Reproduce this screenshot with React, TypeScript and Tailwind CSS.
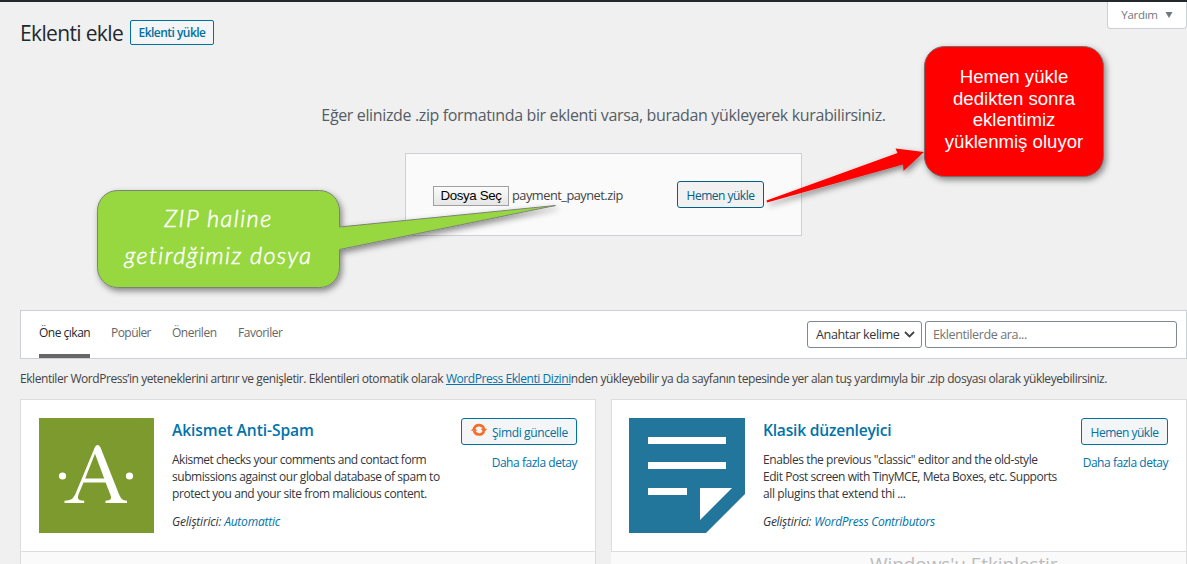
import type { ReactNode } from 'react';

const nav = [
  { label: 'Öne çıkan', active: true, cls: 'w-[51px] tracking-[-0.500px]' },
  { label: 'Popüler', active: false, cls: 'w-[40px] tracking-[-0.550px]' },
  { label: 'Önerilen', active: false, cls: 'w-[45px] tracking-[-0.500px]' },
  { label: 'Favoriler', active: false, cls: 'w-[44px] tracking-[-0.480px]' },
];

function AkismetLogo() {
  return (
    <svg width="115" height="115" viewBox="0 0 115 115" className="block">
      <rect width="115" height="115" fill="#7c9a2d" />
      <circle cx="23.500" cy="58" r="3.600" fill="#fff" />
      <circle cx="90.500" cy="58" r="3.600" fill="#fff" />
      <path
        fill="#fff"
        fillRule="evenodd"
        d="M25.500 85v-2.200c6.500-.4 8.500-1.600 11-7L54.500 32.500c1.200-3.200 2.200-5.400 4-5.400s2.800 1.600 3.800 4.400L79.500 75c2.300 5.800 4 7.400 8.500 7.800V85H66.500v-2.200c5.500-.4 6.500-1.800 4.800-6.300L66.600 64.500H44.500l-4.700 11.300c-2 5-1 6.600 5.400 7V85zM46.200 60.500h19L56 35.800z"
      />
    </svg>
  );
}

function ClassicLogo() {
  return (
    <svg width="116" height="115" viewBox="0 0 116 115" className="-ml-px block">
      <path fill="#22759b" d="M0 0H116V76L77 115H0z" />
      <path fill="#fff" d="M19 19h78v7H19zM19 44h78v7H19zM19 70h39v7H19zM71 70h32L71 102z" />
    </svg>
  );
}

function UpdateIcon() {
  return (
    <svg width="16" height="14" viewBox="0 0 16 14" className="mt-[-5px] block">
      <path d="M3.200 5.200A5.200 5.200 0 0 1 13 6M12.800 8.400A5.200 5.200 0 0 1 3 7.600" fill="none" stroke="#f56e28" strokeWidth="2.600" />
      <path fill="#f56e28" d="M-0.200 7.800 3 4l3.300 3.800zM16.200 5.700 13 9.500 9.700 5.700z" />
    </svg>
  );
}

function Card({
  logo,
  title,
  titleCls,
  lines,
  author,
  authorCls,
  action,
  footerCls,
  children,
}: {
  logo: ReactNode;
  title: string;
  titleCls: string;
  lines: { text: string; cls: string }[];
  author: string;
  authorCls: string;
  action: ReactNode;
  footerCls: string;
  children?: ReactNode;
}) {
  return (
    <article className="h-[180px] w-[576px]">
      <div className="flex h-[152px] border border-b-0 border-[#dddddd] bg-white pt-[18px] pr-[18px]">
        <div className="w-[133px] shrink-0 pl-[18px]">{logo}</div>
        <div className="min-w-0 flex-1 pl-[18px] whitespace-nowrap">
          <h3 className={`h-[33px] text-[15.600px] leading-[24px] font-semibold text-[#0073aa] ${titleCls}`}>{title}</h3>
          {lines.map((l) => (
            <p key={l.text} className={`text-[12px] leading-[17px] text-[#32373c] ${l.cls}`}>
              {l.text}
            </p>
          ))}
          <p className={`mt-[11px] text-[12px] leading-[17px] text-[#32373c] italic ${authorCls}`}>
            Geliştirici: <a className="text-[#0073aa]">{author}</a>
          </p>
        </div>
        <div className="flex flex-col items-end whitespace-nowrap">
          {action}
          <a className="mt-[9px] text-[12px] leading-[18px] tracking-[-0.460px] text-[#0073aa]">Daha fazla detay</a>
        </div>
      </div>
      <div className={`h-[28px] overflow-hidden border-t border-[#dddddd] bg-[#fafafa] ${footerCls}`}>{children}</div>
    </article>
  );
}

export default function App() {
  return (
    <div className="relative h-[564px] w-[1187px] overflow-hidden border-t-2 border-[#23282d] bg-[#f0f0f0] font-['Open_Sans','Noto_Sans',sans-serif] text-[#444444]">
      <header className="flex h-[95px] justify-between pl-5">
        <div className="flex h-[61px] items-center whitespace-nowrap">
          <h1 className="w-[110px] text-[21px] leading-[28px] font-normal tracking-[-0.650px] text-[#23282d]">Eklenti ekle</h1>
          <button className="flex h-[25px] w-[84px] items-center justify-center rounded-[2px] border border-[#0071a1] bg-[#f3f5f6] text-[12px] font-semibold tracking-[-0.540px] text-[#0071a1]">
            Eklenti yükle
          </button>
        </div>
        <div className="flex h-[27px] w-[80px] items-center justify-center gap-[7px] rounded-b-[4px] border border-t-0 border-[#ccd0d4] bg-white text-[11.500px] tracking-[-0.300px] text-[#72777c]">
          Yardım
          <svg width="8" height="6" viewBox="0 0 8 6">
            <path d="M0.500 0h7L4 6z" fill="#72777c" />
          </svg>
        </div>
      </header>

      <section className="flex h-[213px] flex-col items-center pl-[20px]">
        <p className="h-[56px] text-[16px] leading-[36px] tracking-[-0.360px] whitespace-nowrap text-[#555d66]">
          Eğer elinizde .zip formatında bir eklenti varsa, buradan yükleyerek kurabilirsiniz.
        </p>
        <form className="flex h-[83px] w-[397px] items-center border border-[#ccd0d4] bg-[#fafafa] pl-[27px]">
          <span className="mt-[2px] flex h-[20px] w-[76px] items-center justify-center border border-[#a0a0a0] bg-gradient-to-b from-[#fbfbfb] to-[#e6e6e6] font-['Liberation_Sans',sans-serif] text-[13.300px] tracking-[-0.350px] whitespace-nowrap text-black">
            Dosya Seç
          </span>
          <span className="mt-[2px] w-[168px] pl-[3px] text-[12.800px] tracking-[-0.500px]">payment_paynet.zip</span>
          <span className="flex h-[27px] w-[87px] items-center justify-center rounded-[3px] border border-[#016087] bg-[#f1f1f1] pt-[2px] text-[12px] tracking-[-0.500px] text-[#016087]">
            Hemen yükle
          </span>
        </form>
      </section>

      <section className="ml-5 flex h-[49px] justify-between border border-[#ccd0d4] bg-white pr-[9px] pl-[18px]">
        <nav className="flex gap-[21px]">
          {nav.map((n) => (
            <a
              key={n.label}
              className={`${n.cls} h-[47px] border-b-4 pt-[13px] text-[12px] leading-[18px] whitespace-nowrap ${
                n.active ? 'border-[#666666] text-[#23282d]' : 'border-transparent text-[#666666]'
              }`}
            >
              {n.label}
            </a>
          ))}
        </nav>
        <div className="flex gap-[3px] pt-[10px]">
          <div className="flex h-[27px] w-[115px] items-center justify-between rounded-[3px] border border-[#7e8993] pt-[2px] pr-[6px] pl-[8px] text-[12.600px] tracking-[-0.400px] whitespace-nowrap text-[#32373c]">
            Anahtar kelime
            <svg width="11" height="7" viewBox="0 0 11 7" className="mt-[-2px] shrink-0">
              <path d="M1 1l4.500 4.500L10 1" fill="none" stroke="#444" strokeWidth="1.800" />
            </svg>
          </div>
          <div className="flex h-[27px] w-[252px] items-center rounded-[3px] border border-[#7e8993] pt-[2px] pl-[7px] text-[12.600px] tracking-[-0.420px] text-[#757575]">
            Eklentilerde ara...
          </div>
        </div>
      </section>

      <p className="h-[40px] pt-[11px] pl-5 text-[12px] leading-[18px] tracking-[-0.435px] whitespace-nowrap">
        Eklentiler WordPress’in yeteneklerini artırır ve genişletir. Eklentileri otomatik olarak{' '}
        <a className="text-[#0073aa] underline">WordPress Eklenti Dizini</a>nden yükleyebilir ya da sayfanın tepesinde yer alan tuş
        yardımıyla bir .zip dosyası olarak yükleyebilirsiniz.
      </p>

      <section className="flex gap-[15px] pl-5">
        <Card
          logo={<AkismetLogo />}
          title="Akismet Anti-Spam"
          titleCls="tracking-[-0.080px]"
          lines={[
            { text: 'Akismet checks your comments and contact form', cls: 'tracking-[-0.480px]' },
            { text: 'submissions against our global database of spam to', cls: 'tracking-[-0.440px]' },
            { text: 'protect you and your site from malicious content.', cls: 'tracking-[-0.430px]' },
          ]}
          author="Automattic"
          authorCls="tracking-[-0.200px]"
          footerCls="border-x"
          action={
            <button className="flex h-[27px] w-[116px] items-center rounded-[3px] border border-[#0071a1] bg-[#f3f5f6] pt-[2px] pl-[9px] text-[12px] tracking-[-0.350px] text-[#0071a1]">
              <UpdateIcon />
              <span className="ml-[5px]">Şimdi güncelle</span>
            </button>
          }
        />
        <Card
          logo={<ClassicLogo />}
          title="Klasik düzenleyici"
          titleCls="tracking-[-0.220px]"
          lines={[
            { text: 'Enables the previous "classic" editor and the old-style', cls: 'tracking-[-0.420px]' },
            { text: 'Edit Post screen with TinyMCE, Meta Boxes, etc. Supports', cls: 'tracking-[-0.450px]' },
            { text: 'all plugins that extend thi ...', cls: 'tracking-[-0.370px]' },
          ]}
          author="WordPress Contributors"
          authorCls="tracking-[-0.270px]"
          footerCls="border-r"
          action={
            <button className="flex h-[27px] w-[87px] items-center justify-center rounded-[3px] border border-[#0071a1] bg-[#f3f5f6] pt-[2px] text-[12px] tracking-[-0.500px] text-[#0071a1]">
              Hemen yükle
            </button>
          }
        >
          <p className="pl-[259px] text-[19px] leading-[24px] tracking-[-0.080px] whitespace-nowrap text-[#bcbcbc]">Windows'u Etkinleştir</p>
        </Card>
      </section>

      <svg className="absolute top-[-2px] left-0" width="1187" height="320" viewBox="0 0 1187 320">
        <defs>
          <filter id="shade" x="-20%" y="-20%" width="140%" height="150%">
            <feDropShadow dx="2" dy="3" stdDeviation="3" floodColor="#000" floodOpacity="0.45" />
          </filter>
        </defs>
        <path
          filter="url(#shade)"
          d="M117.500 190.500H319.500A20 20 0 0 1 339.500 210.500V227L555.500 205.500L339.500 249.500V267.500A20 20 0 0 1 319.500 287.500H117.500A20 20 0 0 1 97.500 267.500V210.500A20 20 0 0 1 117.500 190.500z"
          fill="#97d741"
          stroke="#7c8474"
        />
        <rect filter="url(#shade)" x="924.500" y="46.500" width="179" height="130" rx="20" fill="#ff0000" stroke="#7d6a6a" />
        <path filter="url(#shade)" d="M766.500 200.500L897.500 153L895.500 148.500L924 152L903.500 171L903 164.500L767 202.500z" fill="#ff0000" />
      </svg>
      <div className="absolute top-[198px] left-[97px] flex w-[243px] flex-col items-center font-['Lato',sans-serif] text-[23.500px] leading-[37px] font-light whitespace-nowrap text-white italic [-webkit-text-stroke:0.500px_white]">
        <span className="tracking-[1.500px]">ZIP haline</span>
        <span className="tracking-[1.400px]">getirdğimiz dosya</span>
      </div>
      <div className="absolute top-[64px] left-[924px] w-[180px] text-center font-['Liberation_Sans',sans-serif] text-[18.600px] leading-[21.500px] whitespace-nowrap text-white">
        Hemen yükle
        <br />
        dedikten sonra
        <br />
        eklentimiz
        <br />
        yüklenmiş oluyor
      </div>
    </div>
  );
}
